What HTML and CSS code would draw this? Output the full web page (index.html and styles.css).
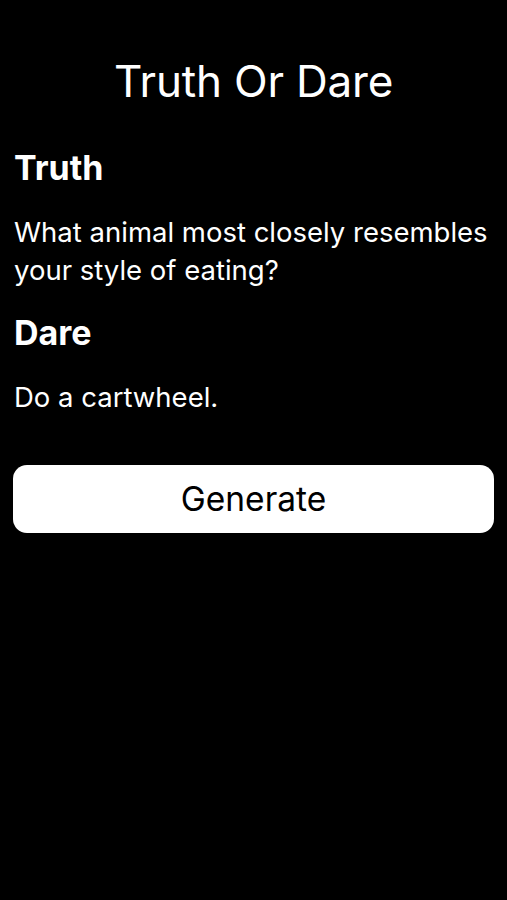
FILE: index.html
```html
<!DOCTYPE html>
<html lang="en">
<head>
  <meta charset="UTF-8">
  <title>Truth Or Dare</title>
  <link rel="stylesheet" href="styles.css">
</head>
<body>

  <div class="app">
    <h1 class="title">Truth Or Dare</h1>

    <h2 class="label">Truth</h2>
    <p class="prompt" id="truth">What animal most closely resembles your style of eating?</p>

    <h2 class="label">Dare</h2>
    <p class="prompt" id="dare">Do a cartwheel.</p>

    <button class="btn">Generate</button>
  </div>

</body>
</html>
```
FILE: styles.css
```css
* { margin: 0; padding: 0; box-sizing: border-box; font-family: 'Inter', 'Liberation Sans', sans-serif; }

body {
  background: #000;
  color: #fff;
  min-height: 100vh;
}

.app {
  padding: 55px 13px 0;
  display: flex;
  flex-direction: column;
}

.title {
  font-size: 44px;
  line-height: 52px;
  font-weight: 400;
  text-align: center;
  letter-spacing: -0.2px;
  margin-bottom: 41px;
}

.label {
  font-size: 34px;
  line-height: 40px;
  font-weight: 700;
  padding-left: 1px;
  margin-bottom: 25px;
}

.prompt {
  font-size: 27.5px;
  line-height: 38px;
  margin-bottom: 24px;
  padding-left: 1px;
}

.btn {
  margin-top: 25px;
  height: 68px;
  background: #fff;
  color: #000;
  border: none;
  border-radius: 14px;
  font-size: 33.5px;
  cursor: pointer;
}
```
